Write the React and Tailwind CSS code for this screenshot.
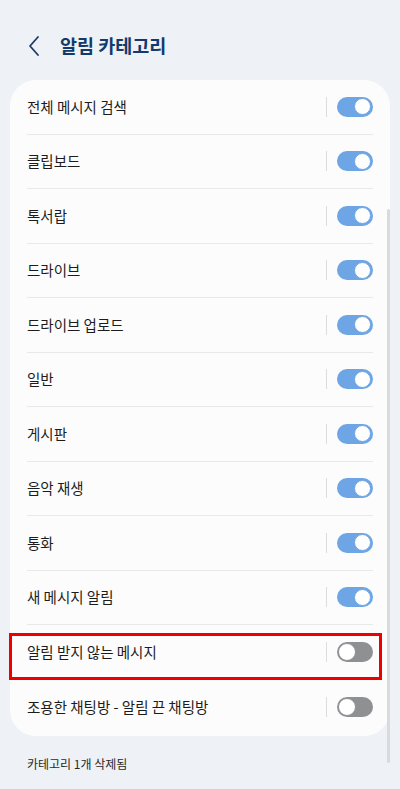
import React from "react";

const rows = [
  { label: "전체 메시지 검색", on: true },
  { label: "클립보드", on: true },
  { label: "톡서랍", on: true },
  { label: "드라이브", on: true },
  { label: "드라이브 업로드", on: true },
  { label: "일반", on: true },
  { label: "게시판", on: true },
  { label: "음악 재생", on: true },
  { label: "통화", on: true },
  { label: "새 메시지 알림", on: true },
  { label: "알림 받지 않는 메시지", on: false, marked: true },
  { label: "조용한 채팅방 - 알림 끈 채팅방", on: false, last: true },
];

function Toggle({ on }) {
  return on ? (
    <div className="flex h-[20px] w-[36px] items-center justify-end rounded-full bg-[#6da5e5] pr-[2px]">
      <div className="h-[17px] w-[17px] rounded-full border-[1.5px] border-[#6da5e5] bg-white" />
    </div>
  ) : (
    <div className="flex h-[20px] w-[36px] items-center rounded-full bg-[#8f9094] pl-[1px]">
      <div className="h-[18px] w-[18px] rounded-full border-[1.5px] border-[#8f9094] bg-white" />
    </div>
  );
}

function Row({ label, on, marked, last }) {
  return (
    <div className="relative px-[17px]">
      <div
        className={`flex h-[54.5px] items-center ${last ? "" : "border-b border-[#e8e9eb]"}`}
      >
        <span className="flex-1 text-[14.5px] text-[#1c1c1c]">{label}</span>
        <div className="mr-[10px] h-[20px] w-px bg-[#dcdcde]" />
        <Toggle on={on} />
      </div>
      {marked && (
        <div className="absolute left-[-1px] right-[8px] top-[8px] h-[47px] border-[3px] border-[#ee0000]" />
      )}
    </div>
  );
}

export default function App() {
  return (
    <div
      className="relative h-[789px] w-[400px] overflow-hidden bg-[#eef1f5]"
      style={{ fontFamily: '"Noto Sans CJK KR", "Noto Sans", sans-serif' }}
    >
      <div className="flex h-[80px] items-center pl-[27px] pt-[12px]">
        <svg width="14" height="22" viewBox="0 0 14 22" fill="none">
          <path d="M11 2 L3 11 L11 20" stroke="#1e3a66" strokeWidth="1.8" strokeLinecap="round" strokeLinejoin="round" />
        </svg>
        <span className="ml-[19px] text-[18.5px] font-bold text-[#14396b]">알림 카테고리</span>
      </div>
      <div className="mx-[10px] rounded-[26px] bg-[#fcfcfc] pb-[2px]">
        {rows.map((r) => (
          <Row key={r.label} {...r} />
        ))}
      </div>
      <div className="pl-[27px] pt-[19px] text-[12px] text-[#2a2a2a]">카테고리 1개 삭제됨</div>
      <div className="absolute left-[387px] top-[209px] h-[554px] w-[3px] rounded-full bg-[#d9dadc]" />
    </div>
  );
}
